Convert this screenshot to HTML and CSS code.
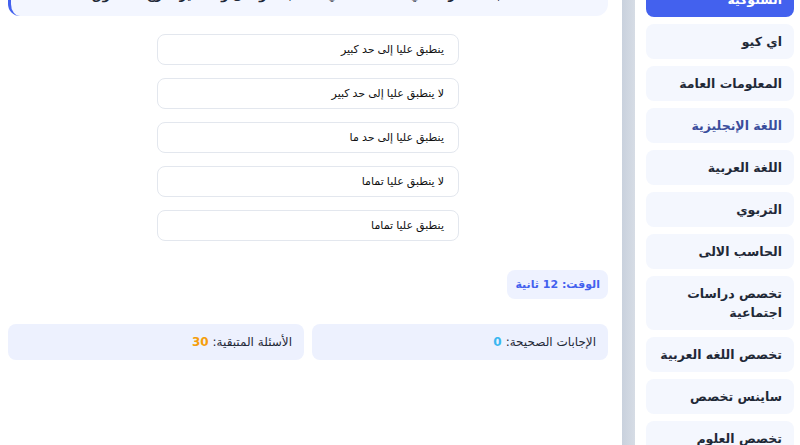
FILE: index.html
```html
<!DOCTYPE html>
<html lang="ar" dir="rtl">
<head>
<meta charset="utf-8">
<link rel="stylesheet" href="styles.css">
</head>
<body>
<div class="page">
  <aside class="sidebar">
    <div class="items">
      <div class="item active">السلوكية</div>
      <div class="item">اي كيو</div>
      <div class="item">المعلومات العامة</div>
      <div class="item hover">اللغة الإنجليزية</div>
      <div class="item">اللغة العربية</div>
      <div class="item">التربوي</div>
      <div class="item">الحاسب الالى</div>
      <div class="item">تخصص دراسات اجتماعية</div>
      <div class="item">تخصص اللغه العربية</div>
      <div class="item">ساينس تخصص</div>
      <div class="item">تخصص العلوم</div>
    </div>
    <div class="strip"></div>
  </aside>
  <main class="main">
    <div class="question">لا تحب المشاركة في الأنشطة التي تتطلب التواصل والتفكير خارج الصندوق.</div>
    <div class="options">
      <div class="option">ينطبق عليا إلى حد كبير</div>
      <div class="option">لا ينطبق عليا إلى حد كبير</div>
      <div class="option">ينطبق عليا إلى حد ما</div>
      <div class="option">لا ينطبق عليا تماما</div>
      <div class="option">ينطبق عليا تماما</div>
    </div>
    <div class="timer-row">
      <div class="timer">الوقت: 12 ثانية</div>
    </div>
    <div class="stats">
      <div class="stat">الإجابات الصحيحة: <span class="correct">0</span></div>
      <div class="stat">الأسئلة المتبقية: <span class="remaining">30</span></div>
    </div>
  </main>
</div>
</body>
</html>
```

FILE: styles.css
```css
html, body {
  margin: 0;
  padding: 0;
  background: #ffffff;
  overflow: hidden;
}
body {
  font-family: "DejaVu Sans", "Noto Sans", sans-serif;
  color: #1f2937;
}
.page {
  display: flex;
  flex-direction: row;
  margin-top: -26px;
  height: 490px;
}
.sidebar {
  width: 178px;
  flex: none;
  display: flex;
  flex-direction: row;
  background: #ffffff;
}
.items {
  flex: 1;
  padding: 8px 6px 0 11px;
  display: flex;
  flex-direction: column;
  gap: 7px;
}
.strip {
  width: 13px;
  flex: none;
  background: linear-gradient(to right, #c9d1dd, #d6dce5);
}
.item {
  background: #f4f7fe;
  border-radius: 8px;
  padding: 8px 12px;
  font-size: 12.5px;
  font-weight: bold;
  line-height: 19px;
  color: #1f2937;
  text-align: right;
}
.item.active {
  background: #4361ee;
  color: #ffffff;
}
.item.hover {
  color: #3a4d9c;
}
.main {
  flex: 1;
  padding: 8px 14px 0 8px;
  display: flex;
  flex-direction: column;
}
.question {
  background: #f3f6ff;
  border-left: 3px solid #4361ee;
  border-radius: 12px;
  padding: 3px 16px 11px;
  line-height: 20px;
  font-size: 12px;
  font-weight: bold;
  text-align: center;
  color: #1f2937;
}
.options {
  margin-top: 18px;
  align-self: center;
  width: 302px;
  display: flex;
  flex-direction: column;
  gap: 13px;
}
.option {
  background: #ffffff;
  border: 1px solid #e3e7ee;
  border-radius: 8px;
  height: 29px;
  padding: 0 14px;
  display: flex;
  align-items: center;
  font-family: "Liberation Sans", "DejaVu Sans", sans-serif;
  font-size: 11px;
  color: #111111;
}
.timer-row {
  margin-top: 29px;
  display: flex;
}
.timer {
  background: #eef2ff;
  border-radius: 8px;
  height: 29px;
  padding: 0 8px;
  display: flex;
  align-items: center;
  font-size: 11px;
  font-weight: bold;
  color: #4361ee;
}
.stats {
  margin-top: 25px;
  display: flex;
  gap: 8px;
}
.stat {
  flex: 1;
  background: #edf1fe;
  border-radius: 8px;
  height: 36px;
  padding: 0 12px;
  display: flex;
  align-items: center;
  font-size: 12px;
  color: #1f2937;
}
.correct {
  color: #3ab7f0;
  font-weight: bold;
  margin-right: 4px;
}
.remaining {
  color: #f59e0b;
  font-weight: bold;
  margin-right: 4px;
}
```
